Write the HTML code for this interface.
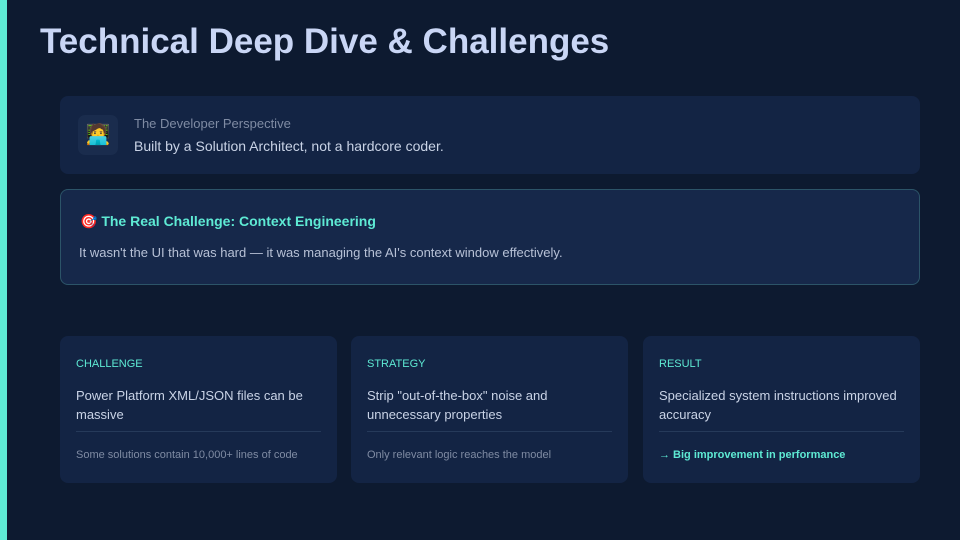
<!DOCTYPE html>
<html><head><meta charset="utf-8"><style>
*{margin:0;padding:0;box-sizing:border-box}
body{width:960px;height:540px;overflow:hidden;background:#0d1a30;font-family:"Liberation Sans","DejaVu Sans",sans-serif;position:relative}
.bar{position:absolute;left:0;top:0;width:7px;height:540px;background:#5eead4}
h1{position:absolute;left:40px;top:22px;font-size:35px;font-weight:bold;color:#c9d6f5;letter-spacing:0px}
.c1{position:absolute;left:60px;top:96px;width:860px;height:78px;background:#132444;border-radius:8px}
.ic{position:absolute;left:18px;top:19px;width:40px;height:40px;border-radius:7px;background:#1a2c4d;font-size:20px;text-align:center;line-height:40px}
.c1 .s{position:absolute;left:74px;top:20px;font-size:13px;color:#7f8ba3}
.c1 .m{position:absolute;left:74px;top:42px;font-size:14px;color:#c9d3e6}
.c2{position:absolute;left:60px;top:189px;width:860px;height:96px;background:#16284a;border:1px solid #2c5468;border-radius:8px}
.c2 .t{position:absolute;left:19px;top:23px;font-size:14px;font-weight:bold;color:#5eead4}
.c2 .d{position:absolute;left:18px;top:55px;font-size:13px;color:#b7c1d6}
.card{position:absolute;top:336px;width:277px;height:147px;background:#132444;border-radius:8px}
.lab{position:absolute;left:16px;top:22px;font-size:11px;color:#5eead4}
.tx{position:absolute;left:16px;top:50px;width:250px;font-size:13px;line-height:19px;color:#c9d3e6}
.hr{position:absolute;left:16px;right:16px;top:95px;height:1px;background:#263a5a}
.ft{position:absolute;left:16px;top:113px;font-size:11px;color:#7f8ba3}
</style></head><body>
<div class="bar"></div>
<h1>Technical Deep Dive &amp; Challenges</h1>
<div class="c1"><div class="ic">🧑‍💻</div><div class="s">The Developer Perspective</div><div class="m">Built by a Solution Architect, not a hardcore coder.</div></div>
<div class="c2"><div class="t">🎯 The Real Challenge: Context Engineering</div><div class="d">It wasn't the UI that was hard — it was managing the AI's context window effectively.</div></div>
<div class="card" style="left:60px"><div class="lab">CHALLENGE</div><div class="tx">Power Platform XML/JSON files can be massive</div><div class="hr"></div><div class="ft">Some solutions contain 10,000+ lines of code</div></div>
<div class="card" style="left:351px"><div class="lab">STRATEGY</div><div class="tx">Strip "out-of-the-box" noise and unnecessary properties</div><div class="hr"></div><div class="ft">Only relevant logic reaches the model</div></div>
<div class="card" style="left:643px"><div class="lab">RESULT</div><div class="tx">Specialized system instructions improved accuracy</div><div class="hr"></div><div class="ft" style="color:#5eead4;font-weight:bold">→ Big improvement in performance</div></div>
</body></html>
